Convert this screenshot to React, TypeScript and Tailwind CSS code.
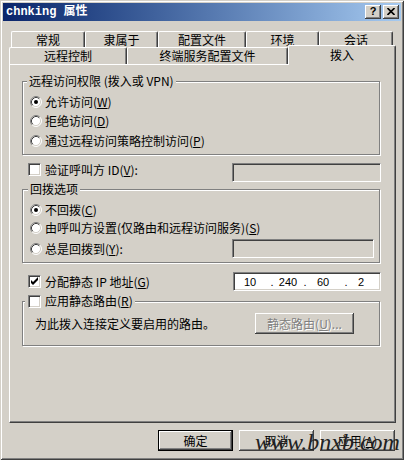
import React from "react";

const raised =
  "bg-[#d4d0c8] shadow-[inset_-1px_-1px_0_#404040,inset_1px_1px_0_#ffffff,inset_-2px_-2px_0_#808080]";
const sunken =
  "border border-t-[#808080] border-l-[#808080] border-r-white border-b-white shadow-[inset_1px_1px_0_#404040,inset_-1px_-1px_0_#d4d0c8]";
const group =
  "relative border border-[#808080] shadow-[inset_1px_1px_0_#ffffff,1px_1px_0_#ffffff]";
const tab =
  "bg-[#d4d0c8] border-l border-t border-r border-l-white border-t-white border-r-[#404040] rounded-t-[2px] shadow-[inset_-1px_0_0_#808080] flex items-center justify-center";

function Radio({ checked }: { checked?: boolean }) {
  return (
    <svg width="12" height="12" viewBox="0 0 12 12" className="shrink-0">
      <circle cx="6" cy="6" r="5" fill="#ffffff" />
      <path d="M2.11 9.89A5.5 5.5 0 0 1 9.89 2.11" fill="none" stroke="#808080" />
      <path d="M9.89 2.11A5.5 5.5 0 0 1 2.11 9.89" fill="none" stroke="#ffffff" />
      <path d="M2.82 9.18A4.5 4.5 0 0 1 9.18 2.82" fill="none" stroke="#404040" />
      <path d="M9.18 2.82A4.5 4.5 0 0 1 2.82 9.18" fill="none" stroke="#d4d0c8" />
      {checked && <circle cx="6" cy="6" r="2" fill="#000000" />}
    </svg>
  );
}

function Check({ checked }: { checked?: boolean }) {
  return (
    <div className={`relative w-[13px] h-[13px] shrink-0 bg-white ${sunken}`}>
      {checked && (
        <svg className="absolute left-[1px] top-[1px]" width="9" height="9" viewBox="0 0 9 9">
          <polygon points="1,3 3,5 8,0 8,3 3,8 1,6" fill="#000000" />
        </svg>
      )}
    </div>
  );
}

function U({ c }: { c: string }) {
  return <span className="underline underline-offset-[1px]">{c}</span>;
}

export default function App() {
  return (
    <div className="relative w-[404px] h-[460px] overflow-hidden bg-[#d4d0c8] p-[3px] shadow-[inset_1px_1px_0_#d4d0c8,inset_-1px_-1px_0_#404040,inset_2px_2px_0_#ffffff,inset_-2px_-2px_0_#808080] font-['Noto_Sans_CJK_SC',sans-serif] text-[12px] leading-[14px] text-black">
      {/* Title bar */}
      <div className="h-[18px] flex items-center bg-linear-to-r from-[#0a246a] to-[#a6caf0] pl-[3px] pr-[2px]">
        <span className="text-white font-bold text-[12px] font-['Liberation_Mono','Noto_Sans_CJK_SC',monospace]">
          chnking 属性
        </span>
        <div className="ml-auto flex gap-[2px]">
          <div className={`w-[16px] h-[14px] flex items-center justify-center ${raised}`}>
            <span className="font-bold text-[11px] leading-[11px] font-['Liberation_Sans',sans-serif] -mt-px">?</span>
          </div>
          <div className={`w-[16px] h-[14px] flex items-center justify-center ${raised}`}>
            <svg width="8" height="7" viewBox="0 0 8 7" className="-mt-px">
              <path d="M0.5 0L7.5 7M7.5 0L0.5 7" stroke="#000000" strokeWidth="1.6" />
            </svg>
          </div>
        </div>
      </div>

      {/* Tab row 1 */}
      <div className="mt-[10px] h-[14px] flex pl-[8px]">
        <div className={`w-[74px] h-[16px] shrink-0 ${tab}`}>常规</div>
        <div className={`w-[73px] h-[16px] shrink-0 ${tab}`}>隶属于</div>
        <div className={`w-[88px] h-[16px] shrink-0 ${tab}`}>配置文件</div>
        <div className={`w-[73px] h-[16px] shrink-0 ${tab}`}>环境</div>
        <div className={`w-[74px] h-[16px] shrink-0 ${tab}`}>会话</div>
      </div>
      {/* Tab row 2 */}
      <div className="h-[19px] flex items-end pl-[6px]">
        <div className={`w-[118px] h-[17px] shrink-0 ${tab}`}>远程控制</div>
        <div className={`w-[161px] h-[17px] shrink-0 ${tab}`}>终端服务配置文件</div>
        <div className={`relative z-10 -mb-px w-[108px] h-[20px] shrink-0 pb-[2px] ${tab}`}>拨入</div>
      </div>

      {/* Panel */}
      <div className="ml-[6px] w-[387px] h-[359px] border border-l-white border-t-white border-r-[#404040] border-b-[#404040] shadow-[inset_-1px_-1px_0_#808080] pl-[12px] pt-[16px] flex flex-col">
        {/* Group 1 */}
        <div className={`w-[358px] h-[74px] ${group}`}>
          <span className="absolute left-[4px] -top-[8px] px-[2px] bg-[#d4d0c8] whitespace-nowrap">
            远程访问权限 (拨入或 VPN)
          </span>
          <div className="flex flex-col pl-[7px] pt-[12px]">
            <div className="h-[16px] flex items-center gap-[3px]">
              <Radio checked />
              <span>允许访问(<U c="W" />)</span>
            </div>
            <div className="mt-[3px] h-[16px] flex items-center gap-[3px]">
              <Radio />
              <span>拒绝访问(<U c="D" />)</span>
            </div>
            <div className="mt-[4px] h-[16px] flex items-center gap-[3px]">
              <Radio />
              <span>通过远程访问策略控制访问(<U c="P" />)</span>
            </div>
          </div>
        </div>

        {/* Verify caller ID */}
        <div className="mt-[8px] flex items-start">
          <div className="ml-[6px] w-[204px] h-[13px] flex items-center gap-[4px]">
            <Check />
            <span className="whitespace-nowrap">验证呼叫方 ID(<U c="V" />):</span>
          </div>
          <div className={`w-[149px] h-[19px] bg-[#d4d0c8] ${sunken}`} />
        </div>

        {/* Group 2 */}
        <div className={`mt-[7px] w-[358px] h-[74px] ${group}`}>
          <span className="absolute left-[5px] -top-[8px] px-[2px] bg-[#d4d0c8] whitespace-nowrap">回拨选项</span>
          <div className="flex flex-col pl-[7px] pt-[12px]">
            <div className="h-[16px] flex items-center gap-[3px]">
              <Radio checked />
              <span>不回拨(<U c="C" />)</span>
            </div>
            <div className="mt-[2px] h-[16px] flex items-center gap-[3px]">
              <Radio />
              <span className="whitespace-nowrap">由呼叫方设置(仅路由和远程访问服务)(<U c="S" />)</span>
            </div>
            <div className="mt-[3px] h-[19px] flex items-center">
              <div className="w-[202px] flex items-center gap-[3px]">
                <Radio />
                <span>总是回拨到(<U c="Y" />):</span>
              </div>
              <div className={`w-[142px] h-[19px] bg-[#d4d0c8] ${sunken}`} />
            </div>
          </div>
        </div>

        {/* Static IP */}
        <div className="mt-[9px] flex items-center">
          <div className="ml-[6px] w-[205px] h-[19px] flex items-center gap-[4px]">
            <Check checked />
            <span className="whitespace-nowrap">分配静态 IP 地址(<U c="G" />)</span>
          </div>
          <div className={`w-[148px] h-[19px] bg-white flex items-center pl-[5px] font-['Liberation_Sans',sans-serif] text-[11px] ${sunken}`}>
            <span className="w-[22px] text-center">10</span>
            <span className="ml-[8px] w-[6px] text-center">.</span>
            <span className="ml-px w-[24px] text-center">240</span>
            <span className="ml-[2px] w-[6px] text-center">.</span>
            <span className="ml-[3px] w-[24px] text-center">60</span>
            <span className="ml-[8px] w-[6px] text-center">.</span>
            <span className="w-[24px] text-center">2</span>
          </div>
        </div>

        {/* Group 3 */}
        <div className={`mt-[10px] w-[358px] h-[45px] ${group}`}>
          <div className="absolute left-[2px] -top-[8px] h-[14px] pl-[3px] pr-[2px] bg-[#d4d0c8] flex items-center gap-[4px] whitespace-nowrap">
            <Check />
            <span>应用静态路由(<U c="R" />)</span>
          </div>
          <div className="pl-[12px] pt-[11px] flex items-center">
            <span className="w-[220px] whitespace-nowrap">为此拨入连接定义要启用的路由。</span>
            <div className={`w-[99px] h-[21px] flex items-center justify-center text-[#808080] [text-shadow:1px_1px_0_#ffffff] ${raised}`}>
              静态路由(<U c="U" />)...
            </div>
          </div>
        </div>
      </div>

      {/* Buttons */}
      <div className="mt-[7px] flex justify-end gap-[6px] pr-[6px]">
        <div className="w-[75px] h-[21px] border border-black bg-[#d4d0c8] shadow-[inset_-1px_-1px_0_#404040,inset_1px_1px_0_#ffffff,inset_-2px_-2px_0_#808080] flex items-center justify-center">
          确定
        </div>
        <div className={`w-[75px] h-[21px] flex items-center justify-center ${raised}`}>取消</div>
        <div className={`w-[75px] h-[21px] flex items-center justify-center ${raised}`}>
          应用(<U c="A" />)
        </div>
      </div>

      {/* Watermark */}
      <div className="absolute left-[255px] top-[430px] font-['Liberation_Serif',serif] italic text-[24px] leading-[24px] text-[#222222] whitespace-nowrap">
        www.bnxb.com
      </div>
    </div>
  );
}
